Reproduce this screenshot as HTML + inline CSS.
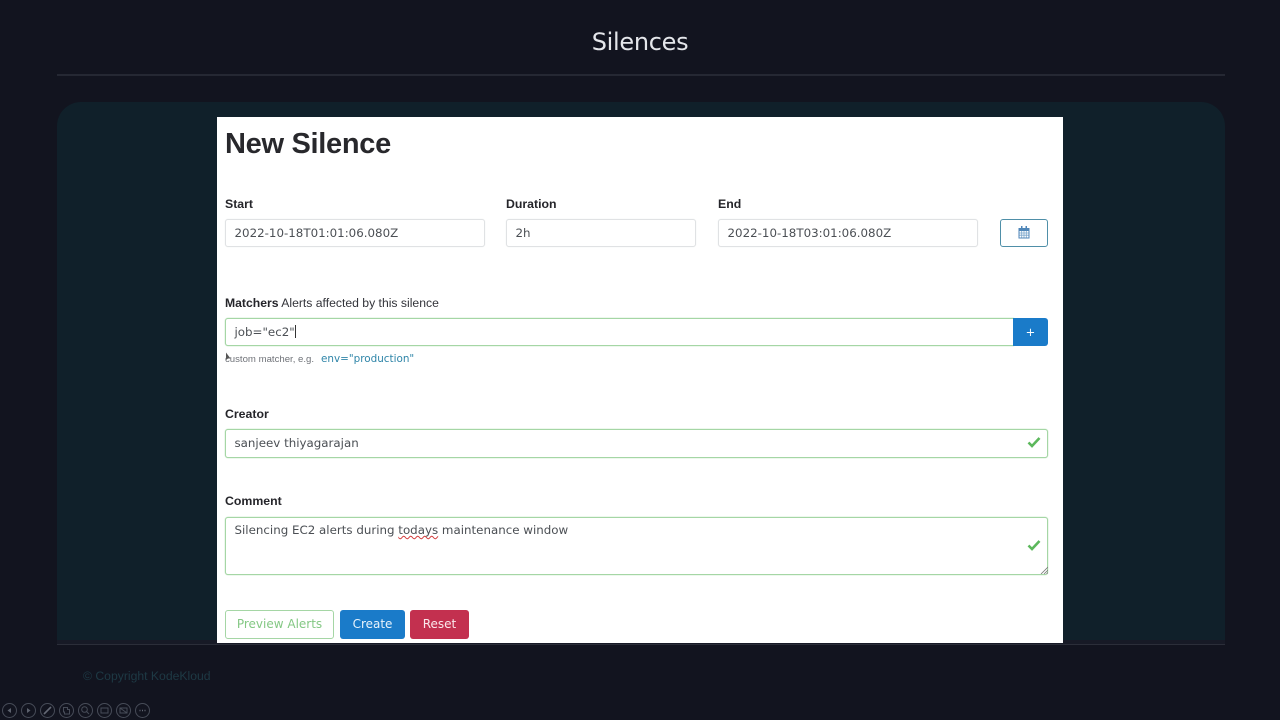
<!DOCTYPE html>
<html><head><meta charset="utf-8">
<style>
*{box-sizing:border-box}
html,body{margin:0;padding:0;width:1280px;height:720px;overflow:hidden;background:#12141f}
body{position:relative;font-family:"DejaVu Sans",sans-serif}
.a{position:absolute;white-space:nowrap}
.lab{font-family:"Liberation Sans",sans-serif;font-weight:700;font-size:12.3px;color:#25252a;line-height:16px}
.inp{position:absolute;background:#fff;border:1px solid #e0e2e4;border-radius:3px;font-size:11.85px;color:#4b4f54;line-height:26px;padding-left:8.500px;white-space:nowrap;box-shadow:0 0 1px #e4e6e8}
.ok{border-color:#a5d6a5;box-shadow:0 0 1px #8fce8f}
.btn{position:absolute;border-radius:3px;font-size:12px;text-align:center;line-height:28px;height:29px}
</style></head><body>
<div class="a" style="left:0;top:24px;width:1280px;text-align:center;font-family:'DejaVu Sans',sans-serif;font-size:24px;letter-spacing:-.3px;line-height:36px;color:#e4e6ea">Silences</div>
<div class="a" style="left:57px;top:74px;width:1168px;height:2px;background:#252833"></div>
<div class="a" style="left:57px;top:102px;width:1168px;height:538px;background:#10202a;border-radius:24px 24px 0 0"></div>
<div class="a" style="left:57px;top:640px;width:1168px;height:5px;background:#171a26;border-bottom:1px solid #2b2e39"></div>
<div class="a" style="left:217px;top:117px;width:846px;height:526px;background:#fff"></div>
<div class="a" style="left:225px;top:124px;font-family:'Liberation Sans',sans-serif;font-weight:700;font-size:29px;letter-spacing:-.3px;line-height:40px;color:#28282c">New Silence</div>

<div class="a lab" style="left:225px;top:196px">Start</div>
<div class="inp" style="left:225px;top:219px;width:260px;height:28px">2022-10-18T01:01:06.080Z</div>
<div class="a lab" style="left:506px;top:196px">Duration</div>
<div class="inp" style="left:506px;top:219px;width:190px;height:28px">2h</div>
<div class="a lab" style="left:718px;top:196px">End</div>
<div class="inp" style="left:718px;top:219px;width:260px;height:28px">2022-10-18T03:01:06.080Z</div>
<div class="a" style="left:1000px;top:219px;width:48px;height:28px;border:1px solid #4f8fa8;border-radius:3px;background:#fff"></div>
<svg class="a" style="left:1018px;top:226px" width="12" height="13" viewBox="0 0 12 13"><path d="M3 0h1.500v2H3zM7.500 0H9v2H7.500z" fill="#4f86b8"/><path fill-rule="evenodd" d="M0.500 2H11.500V12.500H0.500ZM1.500 5V11.500H10.500V5Z" fill="#4f86b8"/><path d="M1.500 7H10.500M1.500 9.200H10.500M3.700 5V11.500M6 5V11.500M8.300 5V11.500" stroke="#7ba6cc" stroke-width=".8"/></svg>

<div class="a" style="left:225px;top:295px;font-family:'Liberation Sans',sans-serif;font-size:12.2px;line-height:16px;color:#33343a"><b style="color:#25252a">Matchers</b> Alerts affected by this silence</div>
<div class="inp ok" style="left:225px;top:318px;width:789px;height:28px;border-radius:3px 0 0 3px">job="ec2"<span style="display:inline-block;width:1px;height:13px;background:#333;vertical-align:-2px"></span></div>
<div class="a" style="left:1013px;top:318px;width:35px;height:28px;background:#1a7bc9;border-radius:0 3px 3px 0;color:#fff;text-align:center;font-size:11.500px;line-height:28px">+</div>
<div class="a" style="left:225px;top:353px;font-family:'Liberation Sans',sans-serif;font-size:9.600px;line-height:14px;color:#6f7278">custom matcher, e.g.</div>
<div class="a" style="left:321px;top:352px;font-size:10.400px;line-height:14px;color:#2f85a8">env="production"</div>
<svg class="a" style="left:225px;top:352px" width="6" height="10" viewBox="0 0 6 10"><path d="M1 0.500V8L3 6.500H5.500Z" fill="#555"/></svg>

<div class="a lab" style="left:225px;top:406px">Creator</div>
<div class="inp ok" style="left:225px;top:429px;width:823px;height:29px">sanjeev thiyagarajan</div>
<svg class="a" style="left:1027px;top:436px" width="15" height="13" viewBox="0 0 15 13"><path d="M1.500 6.500L5 10L12.500 2" fill="none" stroke="#5cb85c" stroke-width="2.600"/></svg>

<div class="a lab" style="left:225px;top:493px">Comment</div>
<div class="inp ok" style="left:225px;top:517px;width:823px;height:58px;line-height:24px">Silencing EC2 alerts during <span style="text-decoration:underline wavy #d23b3b 1px;text-underline-offset:1px;text-decoration-skip-ink:none">todays</span> maintenance window</div>
<svg class="a" style="left:1027px;top:539px" width="15" height="13" viewBox="0 0 15 13"><path d="M1.500 6.500L5 10L12.500 2" fill="none" stroke="#5cb85c" stroke-width="2.600"/></svg>
<svg class="a" style="left:1040px;top:566px" width="8" height="8" viewBox="0 0 8 8"><path d="M1 8L8 1M4 8L8 4M6.500 8L8 6.500" stroke="#777" stroke-width=".8"/></svg>

<div class="btn" style="left:225px;top:610px;width:109px;background:#fff;border:1px solid #a5d6a5;color:#84c884;line-height:26px">Preview Alerts</div>
<div class="btn" style="left:340px;top:610px;width:65px;background:#1a7bc9;color:#e8f3fc">Create</div>
<div class="btn" style="left:410px;top:610px;width:59px;background:#c3304f;color:#fbe8ec">Reset</div>

<div class="a" style="left:83px;top:668.500px;font-family:'Liberation Sans',sans-serif;font-size:12.2px;line-height:15px;color:#1e3a45">© Copyright KodeKloud</div>

<svg class="a" style="left:0;top:701px" width="152" height="19" viewBox="0 0 152 19" fill="none" stroke="#474c58" stroke-width="1">
<circle cx="9.500" cy="9.500" r="7"/><circle cx="28.500" cy="9.500" r="7"/><circle cx="47.500" cy="9.500" r="7"/><circle cx="66.500" cy="9.500" r="7"/><circle cx="85.500" cy="9.500" r="7"/><circle cx="104.500" cy="9.500" r="7"/><circle cx="123.500" cy="9.500" r="7"/><circle cx="142.500" cy="9.500" r="7"/>
<path d="M11 7L7.500 9.500L11 12Z" fill="#5c616d" stroke="none"/><path d="M27 7L30.500 9.500L27 12Z" fill="#5c616d" stroke="none"/>
<path d="M44 13L51 6" stroke="#646975" stroke-width="1.600"/>
<path d="M63.500 6.500h4v2h2v4.500h-5v-2h-1z"/>
<circle cx="84.500" cy="8.500" r="2.800"/><path d="M86.500 10.500L89 13"/>
<rect x="101" y="7" width="7" height="5"/>
<path d="M120 7h7v5h-7zM120 7l7 5"/>
<path d="M139.500 9.500h1M142 9.500h1M144.500 9.500h1" stroke="#646975" stroke-width="1.400"/>
</svg>
</body></html>
